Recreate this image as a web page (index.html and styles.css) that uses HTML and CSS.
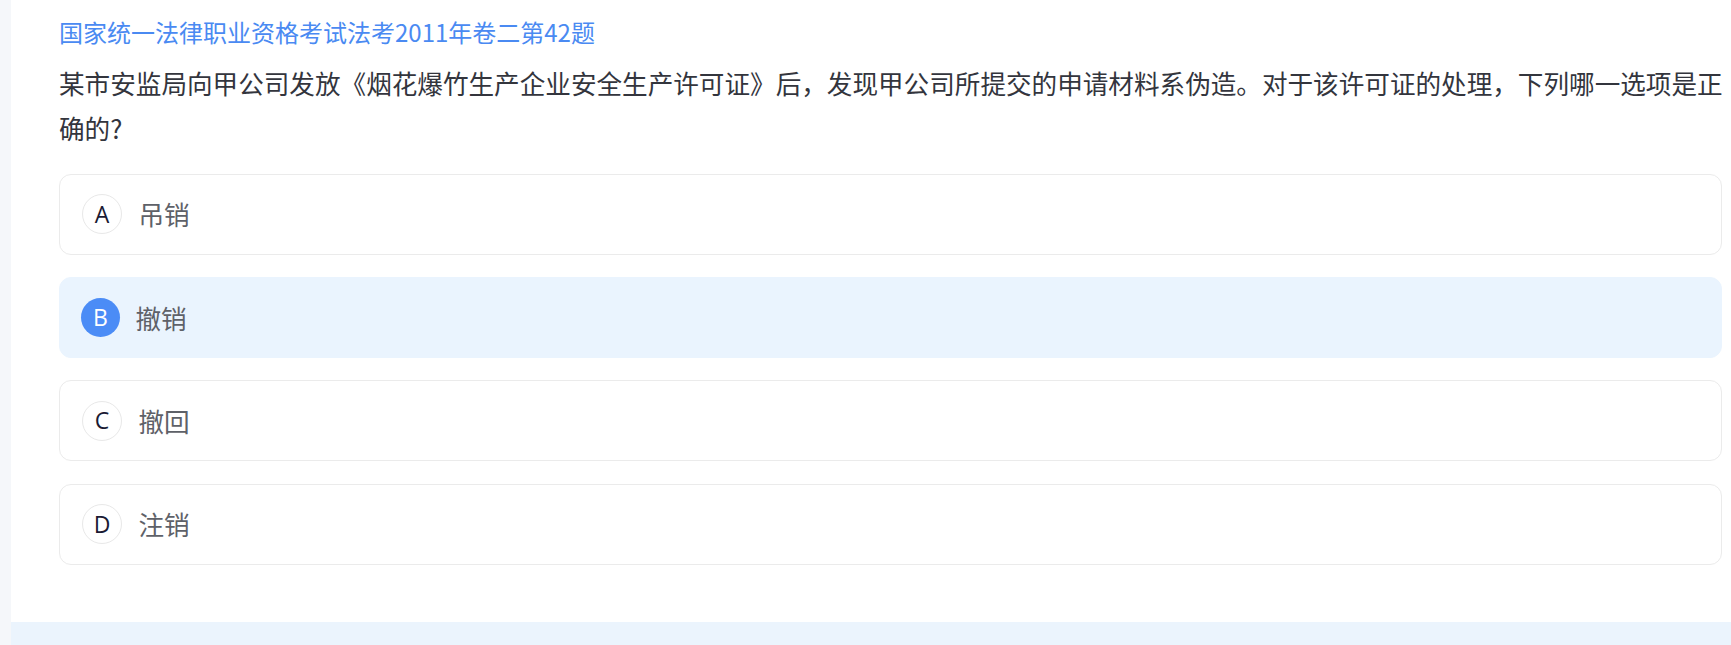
FILE: index.html
```html
<!DOCTYPE html>
<html lang="zh-CN">
<head>
<meta charset="utf-8">
<title>题目</title>
<link rel="stylesheet" href="styles.css">
</head>
<body>
<div class="page">
  <div class="panel">
    <div class="source">国家统一法律职业资格考试法考2011年卷二第42题</div>
    <div class="question">某市安监局向甲公司发放《烟花爆竹生产企业安全生产许可证》后，发现甲公司所提交的申请材料系伪造。对于该许可证的处理，下列哪一选项是正确的?</div>
    <div class="options">
      <div class="option"><span class="letter">A</span><span class="text">吊销</span></div>
      <div class="option selected"><span class="letter">B</span><span class="text">撤销</span></div>
      <div class="option"><span class="letter">C</span><span class="text">撤回</span></div>
      <div class="option"><span class="letter">D</span><span class="text">注销</span></div>
    </div>
  </div>
  <div class="bottom-bar"></div>
</div>
</body>
</html>
```

FILE: styles.css
```css
html, body {
  margin: 0;
  padding: 0;
  height: 645px;
  overflow: hidden;
  background: #f5f7fa;
}

.page {
  margin-left: 11px;
  font-family: "Noto Sans CJK SC", "Noto Sans", sans-serif;
}

.panel {
  background: #ffffff;
  padding: 14px 9px 57px 48px;
}

.source {
  font-size: 24px;
  line-height: 36px;
  color: #4a8af2;
}

.question {
  margin-top: 11px;
  margin-right: -4px;
  font-size: 25.6px;
  line-height: 44.8px;
  color: #33353d;
}

.options {
  margin-top: 23px;
  display: flex;
  flex-direction: column;
  gap: 22.4px;
}

.option {
  box-sizing: border-box;
  height: 81px;
  border: 1px solid #ebebeb;
  border-radius: 12px;
  display: flex;
  align-items: center;
  gap: 16.5px;
  padding-left: 22px;
  background: #ffffff;
}

.letter {
  box-sizing: border-box;
  width: 40px;
  height: 40px;
  border-radius: 50%;
  border: 1px solid #e8e8e8;
  display: flex;
  align-items: center;
  justify-content: center;
  font-family: "Open Sans", "Noto Sans", sans-serif;
  font-size: 23px;
  color: #1a1a33;
  line-height: 1;
}

.text {
  font-size: 25.6px;
  color: #5e6168;
  line-height: 1;
}

.option.selected {
  background: #eaf4fe;
  border-color: #eaf4fe;
}

.option.selected .letter {
  width: 39px;
  height: 39px;
  margin-left: -1px;
  border: none;
  background: #4b8cf6;
  color: #ffffff;
}

.option.selected .text {
  margin-left: -1px;
}

.bottom-bar {
  height: 30px;
  background: #ebf4fd;
}
```
